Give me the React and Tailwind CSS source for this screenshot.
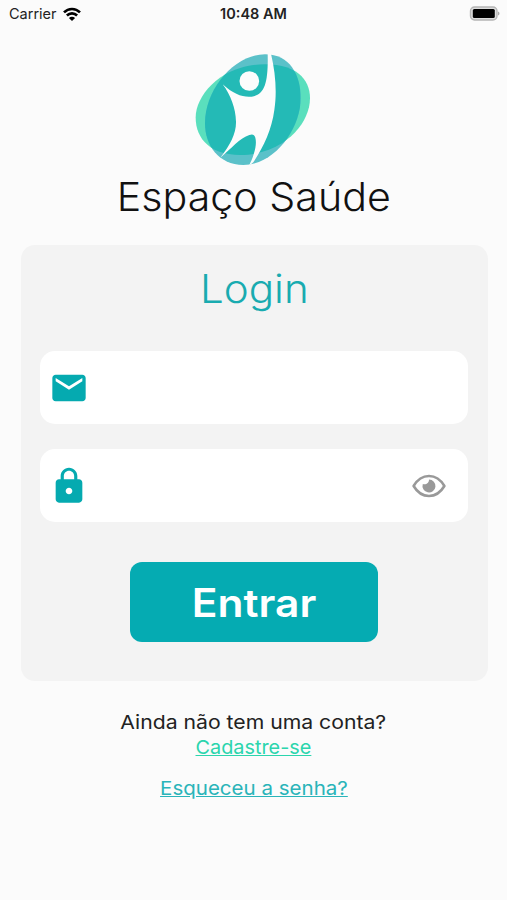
import { MdEmail, MdLock } from "react-icons/md";

const Logo = () => (
  <svg className="h-[130px] w-[140px]" viewBox="0 0 420 390">
    <defs>
      <clipPath id="leaf">
        <path d="M240 28C315 28 347 90 347 160C347 250 270 360 175 360C100 360 60 300 60 235C60 130 150 28 240 28Z" />
      </clipPath>
    </defs>
    <path fill="#5adfbd" d="M32 217C32 150 110 58 240 58C330 58 375 100 375 160C375 240 290 330 165 330C80 330 32 285 32 217Z" />
    <path fill="#5bc1c9" d="M240 28C315 28 347 90 347 160C347 250 270 360 175 360C100 360 60 300 60 235C60 130 150 28 240 28Z" />
    <path clipPath="url(#leaf)" fill="#24bab6" d="M32 217C32 150 110 58 240 58C330 58 375 100 375 160C375 240 290 330 165 330C80 330 32 285 32 217Z" />
    <path fill="#fcfcfc" d="M248 26L258 26C272 85 276 145 268 195C260 255 236 305 205 352L192 362C206 335 217 300 211 278C208 268 202 267 193 270C165 278 138 312 106 338C136 300 154 265 153 230C152 190 137 150 113 118C145 148 175 158 200 155C240 150 250 110 248 26Z" />
    <circle cx="193" cy="108" r="29.500" fill="#fcfcfc" />
  </svg>
);

const StatusBar = () => (
  <div className="grid h-7 grid-cols-3 items-center pl-[9px] pr-[7px] text-[14.5px] text-[#222]">
    <div className="flex items-center gap-[6px]">
      <span>Carrier</span>
      <svg className="h-[15px] w-[18px]" viewBox="0 0 18 15" fill="none" stroke="#000" strokeWidth="2.600">
        <path d="M1 5.400C5.500.8 12.500.8 17 5.400" />
        <path d="M3.900 8.500C6.800 5.600 11.200 5.600 14.100 8.500" />
        <path fill="#000" stroke="none" d="M9 14L5.900 10.900C7.600 9.300 10.400 9.300 12.100 10.900Z" />
      </svg>
    </div>
    <span className="pr-[2px] text-center font-semibold">10:48 AM</span>
    <svg className="mb-[2px] h-[15px] w-[31px] justify-self-end" viewBox="0 0 31 15">
      <rect x="1.500" y="1" width="26.500" height="13" rx="4" fill="#ddd" stroke="#b5b5b5" strokeWidth="1.400" />
      <rect x="3.800" y="3.100" width="22" height="8.800" rx="1.500" fill="#000" />
      <path d="M29 5.500C31 6.300 31 8.700 29 9.500Z" fill="#aaa" />
    </svg>
  </div>
);

const EyeIcon = () => (
  <svg className="h-6 w-[34px]" viewBox="0 0 34 24">
    <path d="M1.600 12C9.500-1.300 24.500-1.300 32.400 12C24.500 25.300 9.500 25.300 1.600 12Z" fill="none" stroke="#999" strokeWidth="2.600" strokeLinejoin="round" />
    <path d="M17 5.500A6.500 6.500 0 1 1 10.800 10C13.800 11.200 17.200 9 17 5.500Z" fill="#999" />
  </svg>
);

const App = () => {
  return (
    <div className="flex h-[900px] w-[507px] flex-col items-center bg-[#fbfbfb] font-['Inter',sans-serif]">
      <header className="w-full">
        <StatusBar />
      </header>

      <div className="mt-[17px] pl-[2px]">
        <Logo />
      </div>
      <h1 className="-mt-px h-[71px] scale-x-[1.055] whitespace-nowrap text-[39px] font-[350] leading-[46px] text-[#111]">
        Espaço Saúde
      </h1>

      <main className="ml-px flex h-[436px] w-[467px] flex-col items-center rounded-[14px] bg-[#f3f3f3] px-5">
        <h2 className="mt-[21px] scale-x-[1.08] text-[39px] font-[350] leading-[46px] text-[#19abb0]">Login</h2>
        <div className="mt-[39px] flex h-[73px] w-[428px] items-center rounded-[15px] bg-white pl-[9px]">
          <MdEmail className="size-10 text-[#05aab0]" />
        </div>
        <div className="mt-[25px] flex h-[73px] w-[428px] items-center justify-between rounded-[15px] bg-white pl-[9px] pr-[22px]">
          <MdLock className="size-10 text-[#05aab0]" />
          <EyeIcon />
        </div>
        <button className="mt-[40px] h-[80px] w-[248px] rounded-[12px] bg-[#05abb2] text-[39px] font-semibold leading-none text-white">
          <span className="inline-block scale-x-[1.09]">Entrar</span>
        </button>
      </main>

      <footer className="mt-[29px] flex flex-col items-center text-[19px] leading-[25px]">
        <p className="scale-x-[1.115] text-[#222]">Ainda não tem uma conta?</p>
        <a className="scale-x-[1.045] text-[#2bd5ad] underline">Cadastre-se</a>
        <a className="mt-[16px] scale-x-[1.08] text-[#2ab4b9] underline">Esqueceu a senha?</a>
      </footer>
    </div>
  );
};

export default App;
